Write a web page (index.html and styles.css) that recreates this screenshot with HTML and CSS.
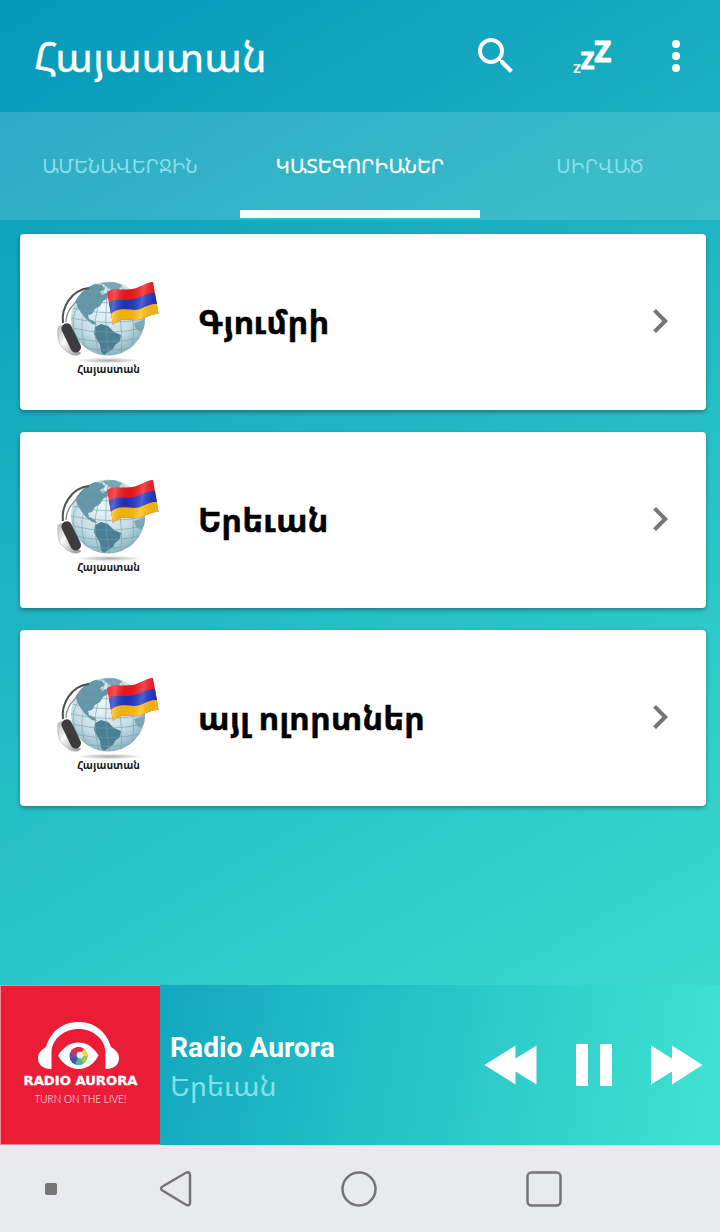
FILE: index.html
```
<!DOCTYPE html>
<html lang="hy">

<head>
    <meta charset="UTF-8">
    <meta name="viewport" content="width=device-width, initial-scale=1.0">
    <title>Հայաստան</title>
    <link rel="stylesheet" href="styles.css">
</head>

<body>
    <!-- shared gradients and icons -->
    <svg class="sprite" width="0" height="0">
        <defs>
            <radialGradient id="sea" cx="0.45" cy="0.35" r="0.65">
                <stop offset="0" stop-color="#edf6f8"/>
                <stop offset="0.65" stop-color="#c5dde4"/>
                <stop offset="1" stop-color="#8db5c1"/>
            </radialGradient>
            <linearGradient id="shine" x1="0" x2="1" y1="0" y2="0.1">
                <stop offset="0" stop-color="#fff" stop-opacity="0.05"/>
                <stop offset="0.18" stop-color="#fff" stop-opacity="0.25"/>
                <stop offset="0.42" stop-color="#000" stop-opacity="0.06"/>
                <stop offset="0.72" stop-color="#fff" stop-opacity="0.22"/>
                <stop offset="1" stop-color="#000" stop-opacity="0.06"/>
            </linearGradient>
            <linearGradient id="cup" x1="0" x2="1" y1="0" y2="1">
                <stop offset="0" stop-color="#b8b8b8"/>
                <stop offset="0.4" stop-color="#fafafa"/>
                <stop offset="1" stop-color="#8e8e8e"/>
            </linearGradient>
            <radialGradient id="ground">
                <stop offset="0" stop-color="#aaa"/>
                <stop offset="1" stop-color="#fff"/>
            </radialGradient>
            <clipPath id="globe-clip"><circle cx="68" cy="53.500" r="37"/></clipPath>
        </defs>
        <symbol id="chevron" viewBox="0 0 24 24">
            <path d="M10 6 8.590 7.410 13.170 12l-4.580 4.590L10 18l6-6z"/>
        </symbol>
    </svg>

    <div class="app">
        <header class="toolbar">
            <h1 class="title">Հայաստան</h1>
            <svg class="icon search" viewBox="0 0 24 24">
                <path d="M15.500 14h-.79l-.28-.27A6.471 6.471 0 0 0 16 9.500 6.500 6.500 0 1 0 9.500 16c1.610 0 3.090-.59 4.230-1.570l.27.28v.79l5 4.990L20.490 19l-4.990-5zm-6 0C7.010 14 5 11.990 5 9.500S7.010 5 9.500 5 14 7.010 14 9.500 11.990 14 9.500 14z"/>
            </svg>
            <svg class="icon sleep" viewBox="0 0 48 48">
                <text x="4.300" y="41" font-size="13">Z</text>
                <text class="mid" x="12" y="36.700" font-size="22.500">Z</text>
                <text class="big" x="25.500" y="29.500" font-size="28.500">Z</text>
            </svg>
            <svg class="icon more" viewBox="0 0 24 24">
                <circle cx="12" cy="6" r="2"/>
                <circle cx="12" cy="12" r="2"/>
                <circle cx="12" cy="18" r="2"/>
            </svg>
        </header>

        <nav class="tabs">
            <a class="tab"><span>ԱՄԵՆԱՎԵՐՋԻՆ</span></a>
            <a class="tab active"><span>ԿԱՏԵԳՈՐԻԱՆԵՐ</span></a>
            <a class="tab"><span>ՍԻՐՎԱԾ</span></a>
        </nav>

        <main class="list">
            <div class="card">
                <svg class="thumb" viewBox="0 0 140 125">
                    <g id="globe">
                        <ellipse cx="69" cy="95.500" rx="33" ry="2.800" fill="url(#ground)"/>
                        <circle cx="68" cy="53.500" r="37" fill="url(#sea)"/>
                        <g clip-path="url(#globe-clip)">
                            <path fill="#6596a9" d="M35 35 40 27 47 22 55 19 62 20 65 24 60 27 62 30 67 28 68 33 63 36 60 41 55 44 52 49 48 50 49 54 54 56 57 60 52 59 46 54 42 49 38 43Z"/>
                            <path fill="#7ba7b7" d="M62 18 74 17 82 20 77 27 72 26Z"/>
                            <path fill="#4c7f95" d="M55 62 61 59 68 61 74 67 81 70 80 76 75 80 73 84 68 87 64 90 61 87 60 80 57 75 54 69Z"/>
                            <path fill="#7ba8b6" d="M94 58 104 55 107 60 101 67 96 64Z"/>
                            <g fill="none" stroke="#6d9eae" stroke-width="0.8" opacity="0.75">
                                <path d="M34 34q34 9 70-3M32 43q37 10 74-1M31 53q38 9 76 0M32 63q37 9 75-1M35 73q34 8 69-1M41 82q28 7 58-1M41 25q26 8 54-2"/>
                                <path d="M65 17q-34 30-18 70M67 17q-19 36-8 74M69 17q-7 38 1 75M70 17q15 38 11 72M73 17q28 32 18 67M75 17q38 28 28 55M62 18q-41 26-24 57"/>
                            </g>
                        </g>
                        <path fill="none" stroke="#4a5053" stroke-width="2" d="M23 58C21 43 31 25 49 23"/>
                        <path fill="none" stroke="#8b9194" stroke-width="1.400" d="M26 57C26 47 33 38 41 33"/>
                        <path fill="url(#cup)" stroke="#aaa" stroke-width="0.600" d="M18 63C20 58 26 62 28 70C31 81 36 86 41 88C36 93 28 89 23 83C19 80 17 73 18 63Z"/>
                        <rect x="26" y="57.500" width="10.500" height="31" rx="5" fill="#3c3c3e" transform="rotate(-26 31 73)"/>
                        <path fill="#f3161c" d="M67 27C75 22 82 26 92 24C100 23 106 17 113 17L118.500 49C109 48 104 56 93 55C85 54 79 54 73 60Z"/>
                        <path fill="#1c36c8" d="M69 38C77 32 84 37 94 34C102 32 106 28 115 28L117 39C108 38 103 45 94 45C85 44 77 43 71 49Z"/>
                        <path fill="#ffbe0a" d="M71 49C77 43 85 44 94 45C103 45 108 38 117 39L118.500 49C109 48 104 56 93 55C85 54 79 54 73 60Z"/>
                        <path fill="url(#shine)" d="M67 27C75 22 82 26 92 24C100 23 106 17 113 17L118.500 49C109 48 104 56 93 55C85 54 79 54 73 60Z"/>
                        <text class="globe-text" x="37" y="107.500" textLength="63" lengthAdjust="spacingAndGlyphs">Հայաստան</text>
                    </g>
                </svg>
                <h2 class="name">Գյումրի</h2>
                <svg class="arrow"><use href="#chevron"/></svg>
            </div>
            <div class="card">
                <svg class="thumb" viewBox="0 0 140 125"><use href="#globe"/></svg>
                <h2 class="name">Երեւան</h2>
                <svg class="arrow"><use href="#chevron"/></svg>
            </div>
            <div class="card">
                <svg class="thumb" viewBox="0 0 140 125"><use href="#globe"/></svg>
                <h2 class="name">այլ ոլորտներ</h2>
                <svg class="arrow"><use href="#chevron"/></svg>
            </div>
        </main>
    </div>

    <footer class="player">
        <svg class="cover" viewBox="0 0 160 160">
            <rect width="160" height="160" fill="#f08a98"/>
            <rect x="1" y="1" width="159" height="158" fill="#eb1c36"/>
            <path fill="#fff" d="M51.500 84C41 84 38 78 38 73C38 67 43 64 46 62C51 45 64 37 78.500 37S106 45 111 62C114 64 119 67 119 73C119 78 116 84 105.500 84V67C105 54 93 44 78.500 44S52 54 51.500 67Z"/>
            <path fill="#fff" d="M58 70.500C68 53 89 53 98.500 70.500C89 88.500 68 88.500 58 70.500Z"/>
            <circle cx="78.500" cy="71" r="9" fill="#7a4b9c"/>
            <path fill="#e5284b" d="M78.500 71 71 66A9 9 0 0 1 84 64Z"/>
            <path fill="#f6d838" d="M78.500 71 84 64A9 9 0 0 1 87.500 71Z"/>
            <path fill="#9ccb4a" d="M78.500 71H87.500A9 9 0 0 1 83 78.800Z"/>
            <path fill="#45b5aa" d="M78.500 71 83 78.800A9 9 0 0 1 75 79.300Z"/>
            <path fill="#3d59a8" d="M78.500 71 75 79.300A9 9 0 0 1 69.700 73Z"/>
            <circle cx="80" cy="70" r="3.300" fill="#f4eee8"/>
            <text class="cover-name" x="23.500" y="100" textLength="114" lengthAdjust="spacingAndGlyphs">RADIO AURORA</text>
            <text class="cover-slogan" x="34.500" y="117.500" textLength="92" lengthAdjust="spacingAndGlyphs">TURN ON THE LIVE!</text>
        </svg>
        <div class="track">
            <div class="station">Radio Aurora</div>
            <div class="city">Երեւան</div>
        </div>
        <svg class="controls" viewBox="0 0 220 44">
            <path d="M.5 22 31.500 2.500V15.500L52.500 2.500V41.500L31.500 28.500V41.500Z"/>
            <path d="M92 1h12v42H92zM116 1h12v42h-12z"/>
            <path d="M218.500 22 188 2.500V15.500L167 2.500V41.500L188 28.500V41.500Z"/>
        </svg>
    </footer>

    <div class="navbar">
        <i class="dot"></i>
        <svg class="nav-icon back" viewBox="0 0 38 38"><path d="M27.500 3 4.500 16.500Q1.500 18.500 4.500 20.500L27.500 34.500Q32 37 32 32V5.500Q32 .5 27.500 3Z"/></svg>
        <svg class="nav-icon home" viewBox="0 0 38 38"><circle cx="19" cy="19" r="16.500"/></svg>
        <svg class="nav-icon recent" viewBox="0 0 38 38"><rect x="2.500" y="2.500" width="33" height="33" rx="4"/></svg>
    </div>
</body>

</html>
```

FILE: styles.css
```
* {
    box-sizing: border-box;
}

body {
    margin: 0;
    width: 720px;
    height: 1232px;
    overflow: hidden;
    display: flex;
    flex-direction: column;
    font-family: Roboto, "Noto Sans Armenian", "DejaVu Sans", sans-serif;
}

.sprite {
    position: absolute;
}

.app {
    height: 985px;
    background: linear-gradient(150deg, #0698ba 0%, #40e0d0 100%) 0 0 / 720px 1120px no-repeat;
}

/* top bar */
.toolbar {
    height: 112px;
    padding: 0 20px 0 34px;
    display: flex;
    align-items: center;
    color: #fff;
}

.title {
    margin: 0;
    flex: 1;
    font-size: 41px;
    font-weight: 400;
    -webkit-text-stroke: 0.4px #fff;
}

.icon {
    width: 48px;
    height: 48px;
    fill: #fff;
}

.sleep {
    margin-left: 49px;
    font-family: "Noto Sans", sans-serif;
    font-weight: 700;
}

.mid,
.big {
    stroke: #fff;
    stroke-width: 1.2;
}

.more {
    margin-left: 35px;
}

/* tabs */
.tabs {
    display: grid;
    grid-template-columns: repeat(3, 1fr);
    height: 108px;
    padding-bottom: 2px;
    background: rgba(255, 255, 255, 0.14);
}

.tab {
    display: flex;
    align-items: center;
    justify-content: center;
    padding-top: 8px;
    border-bottom: 8px solid transparent;
    font-size: 19.9px;
    color: #8be0ec;
}

.active {
    color: #fff;
    border-bottom-color: #fff;
    -webkit-text-stroke: 0.3px #fff;
}

/* category cards */
.list {
    display: flex;
    flex-direction: column;
    gap: 22px;
    padding: 14px 14px 0 20px;
}

.card {
    height: 176px;
    display: flex;
    align-items: center;
    padding: 0 22px 2px 20px;
    background: #fff;
    border-radius: 4px;
    box-shadow: 0 2px 4px rgba(0, 0, 0, 0.35);
}

.thumb {
    width: 140px;
    height: 125px;
    margin-top: 12px;
}

.globe-text {
    font-size: 11px;
    font-weight: 700;
    fill: #111;
}

.name {
    margin: 0 0 0 18px;
    flex: 1;
    font-size: 32.6px;
    font-weight: 700;
    color: #000;
    -webkit-text-stroke: 0.6px #000;
}

.arrow {
    width: 48px;
    height: 48px;
    fill: #757575;
}

/* player */
.player {
    height: 160px;
    display: flex;
    align-items: center;
    padding-right: 16px;
    background: linear-gradient(100deg, #0698ba 0%, #40e3d1 100%);
}

.cover {
    width: 160px;
    height: 160px;
}

.cover-name {
    font-family: "DejaVu Sans", sans-serif;
    font-size: 13px;
    font-weight: 700;
    fill: #fff;
    stroke: #fff;
    stroke-width: 0.3;
}

.cover-slogan {
    font-family: Lato, sans-serif;
    font-size: 11px;
    font-weight: 300;
    fill: #fff;
}

.track {
    flex: 1;
    padding: 3px 0 0 10px;
}

.station {
    font-size: 28.2px;
    line-height: 38px;
    font-weight: 700;
    color: #fff;
}

.city {
    font-size: 28.6px;
    line-height: 38px;
    color: #83e0e6;
}

.controls {
    width: 220px;
    height: 44px;
    fill: #fff;
}

/* system navigation */
.navbar {
    height: 87px;
    display: flex;
    align-items: center;
    padding-left: 45px;
    background: #e9eaed;
}

.dot {
    width: 12px;
    height: 12px;
    border-radius: 2px;
    background: #757575;
}

.nav-icon {
    width: 38px;
    height: 38px;
    fill: none;
    stroke: #757575;
    stroke-width: 2.5;
}

.back {
    margin-left: 101px;
}

.home {
    margin-left: 144px;
}

.recent {
    margin-left: 147px;
}
```
